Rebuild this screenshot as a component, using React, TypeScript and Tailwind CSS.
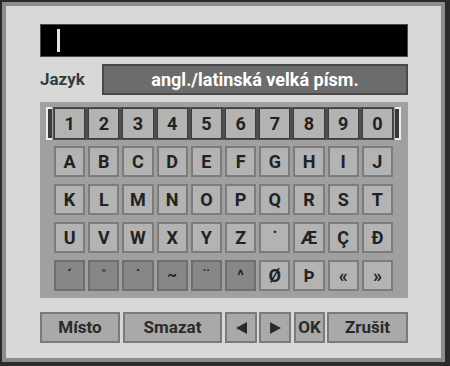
const numberKeys = ['1', '2', '3', '4', '5', '6', '7', '8', '9', '0']

const letterRows = [
  ['A', 'B', 'C', 'D', 'E', 'F', 'G', 'H', 'I', 'J'],
  ['K', 'L', 'M', 'N', 'O', 'P', 'Q', 'R', 'S', 'T'],
  ['U', 'V', 'W', 'X', 'Y', 'Z', '\u02d9', 'Æ', 'Ç', 'Đ'],
]

// dead keys (accents) are drawn dimmed
const lastRow = [
  { k: '´', dead: true },
  { k: '˚', dead: true },
  { k: '˙', dead: true },
  { k: '~', dead: true },
  { k: '¨', dead: true },
  { k: '^', dead: true },
  { k: 'Ø', dead: false },
  { k: 'Þ', dead: false },
  { k: '«', dead: false },
  { k: '»', dead: false },
]

const Key = ({ label }: { label: string }) => (
  <div className='h-[31px] flex items-center justify-center border-2 border-[#7c7c7c] bg-[#b3b3b3] text-[18px] font-bold text-[#222]'>
    {label}
  </div>
)

const Bracket = ({ side }: { side: 'left' | 'right' }) => (
  <div
    className={
      side === 'left'
        ? 'absolute -left-[7px] top-0 h-full w-[6px] bg-[#3a3a3a] border-l-2 border-t-2 border-b-2 border-[#ececec]'
        : 'absolute -right-[7px] top-0 h-full w-[6px] bg-[#3a3a3a] border-r-2 border-t-2 border-b-2 border-[#ececec]'
    }
  ></div>
)

const Btn = ({ w, children }: { w: string; children: React.ReactNode }) => (
  <div className={`${w} h-full flex items-center justify-center border-2 border-[#7a7a7a] bg-[#a9a9a9] text-[17px] font-bold text-[#2a2a2a]`}>
    {children}
  </div>
)

const App = () => {
  return (
    <div className="h-[366px] w-[450px] bg-[#2a2a2a] pt-[2px] pl-[2px] pr-[5px] pb-[4px] font-['Roboto',sans-serif]">
      <div className='h-full border-4 border-[#8c8c8c] bg-[#d8d8d8] pl-[34px] pt-[18px]'>
        {/* text input */}
        <div className='h-[33px] w-[368px] bg-black border border-[#4a4a4a] flex items-center pl-[16px]'>
          <div className='w-[3px] h-[23px] bg-[#e2e2e2]'></div>
        </div>

        {/* language */}
        <div className='mt-[7px] h-[31px] w-[368px] flex items-center'>
          <span className='w-[62px] text-[17px] font-bold text-[#3a3a3a]'>Jazyk</span>
          <div className='flex-1 h-full flex items-center justify-center bg-[#6c6c6c] border-2 border-[#4a4a4a] text-[18px] font-bold text-white'>
            angl./latinská velká písm.
          </div>
        </div>

        {/* keyboard */}
        <div className='mt-[7px] h-[196px] w-[368px] bg-[#a0a0a0] pl-[14px] pr-[15px] pt-[5px]'>
          <div className='relative -mx-[1px] px-[1px] py-[1px] bg-[#4e4e4e]'>
            <Bracket side='left' />
            <div className='grid grid-cols-10 gap-x-[3px]'>
              {numberKeys.map((k) => (
                <div key={k} className='h-[31px] flex items-center justify-center border border-[#3e3e3e] bg-[#b3b3b3] text-[18px] font-bold text-[#222]'>
                  {k}
                </div>
              ))}
            </div>
            <Bracket side='right' />
          </div>

          <div className='mt-[6px] grid grid-cols-10 gap-x-[3px] gap-y-[7px]'>
            {letterRows.flat().map((k, i) => (
              <Key key={i} label={k} />
            ))}
            {lastRow.map((item, i) =>
              item.dead ? (
                <div key={'d' + i} className='h-[31px] flex justify-center pt-[2px] border-2 border-[#6e6e6e] bg-[#878787] text-[15px] font-bold text-[#222]'>
                  {item.k}
                </div>
              ) : (
                <Key key={'l' + i} label={item.k} />
              )
            )}
          </div>
        </div>

        {/* bottom buttons */}
        <div className='mt-[14px] h-[31px] w-[368px] flex'>
          <Btn w='w-[80px]'>Místo</Btn>
          <div className='w-[3px]'></div>
          <Btn w='w-[99px]'>Smazat</Btn>
          <div className='w-[3px]'></div>
          <Btn w='w-[32px]'>
            <svg width='11' height='12' viewBox='0 0 11 12'>
              <polygon points='11,0 11,12 0,6' fill='#2a2a2a' />
            </svg>
          </Btn>
          <div className='w-[2px]'></div>
          <Btn w='w-[32px]'>
            <svg width='11' height='12' viewBox='0 0 11 12'>
              <polygon points='0,0 0,12 11,6' fill='#2a2a2a' />
            </svg>
          </Btn>
          <div className='w-[3px]'></div>
          <Btn w='w-[31px]'>OK</Btn>
          <div className='w-[2px]'></div>
          <Btn w='w-[81px]'>Zrušit</Btn>
        </div>
      </div>
    </div>
  )
}

export default App
